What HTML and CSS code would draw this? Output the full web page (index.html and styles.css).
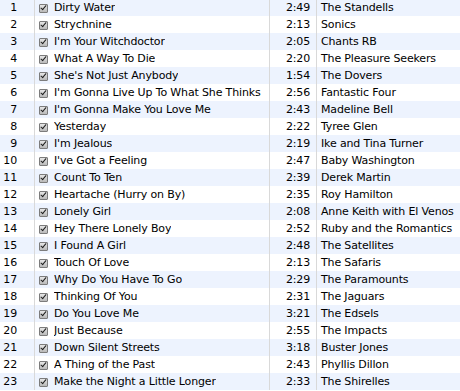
FILE: index.html
```html
<!DOCTYPE html>
<html>
<head>
<meta charset="utf-8">
<link rel="stylesheet" href="styles.css">
</head>
<body>
<div class="list">
  <div class="row"><div class="num">1</div><div class="title"><span class="cb"></span><span class="t">Dirty Water</span></div><div class="time">2:49</div><div class="artist">The Standells</div></div>
  <div class="row"><div class="num">2</div><div class="title"><span class="cb"></span><span class="t">Strychnine</span></div><div class="time">2:13</div><div class="artist">Sonics</div></div>
  <div class="row"><div class="num">3</div><div class="title"><span class="cb"></span><span class="t">I'm Your Witchdoctor</span></div><div class="time">2:05</div><div class="artist">Chants RB</div></div>
  <div class="row"><div class="num">4</div><div class="title"><span class="cb"></span><span class="t">What A Way To Die</span></div><div class="time">2:20</div><div class="artist">The Pleasure Seekers</div></div>
  <div class="row"><div class="num">5</div><div class="title"><span class="cb"></span><span class="t">She's Not Just Anybody</span></div><div class="time">1:54</div><div class="artist">The Dovers</div></div>
  <div class="row"><div class="num">6</div><div class="title"><span class="cb"></span><span class="t">I'm Gonna Live Up To What She Thinks</span></div><div class="time">2:56</div><div class="artist">Fantastic Four</div></div>
  <div class="row"><div class="num">7</div><div class="title"><span class="cb"></span><span class="t">I'm Gonna Make You Love Me</span></div><div class="time">2:43</div><div class="artist">Madeline Bell</div></div>
  <div class="row"><div class="num">8</div><div class="title"><span class="cb"></span><span class="t">Yesterday</span></div><div class="time">2:22</div><div class="artist">Tyree Glen</div></div>
  <div class="row"><div class="num">9</div><div class="title"><span class="cb"></span><span class="t">I'm Jealous</span></div><div class="time">2:19</div><div class="artist">Ike and Tina Turner</div></div>
  <div class="row"><div class="num">10</div><div class="title"><span class="cb"></span><span class="t">I've Got a Feeling</span></div><div class="time">2:47</div><div class="artist">Baby Washington</div></div>
  <div class="row"><div class="num">11</div><div class="title"><span class="cb"></span><span class="t">Count To Ten</span></div><div class="time">2:39</div><div class="artist">Derek Martin</div></div>
  <div class="row"><div class="num">12</div><div class="title"><span class="cb"></span><span class="t">Heartache (Hurry on By)</span></div><div class="time">2:35</div><div class="artist">Roy Hamilton</div></div>
  <div class="row"><div class="num">13</div><div class="title"><span class="cb"></span><span class="t">Lonely Girl</span></div><div class="time">2:08</div><div class="artist">Anne Keith with El Venos</div></div>
  <div class="row"><div class="num">14</div><div class="title"><span class="cb"></span><span class="t">Hey There Lonely Boy</span></div><div class="time">2:52</div><div class="artist">Ruby and the Romantics</div></div>
  <div class="row"><div class="num">15</div><div class="title"><span class="cb"></span><span class="t">I Found A Girl</span></div><div class="time">2:48</div><div class="artist">The Satellites</div></div>
  <div class="row"><div class="num">16</div><div class="title"><span class="cb"></span><span class="t">Touch Of Love</span></div><div class="time">2:13</div><div class="artist">The Safaris</div></div>
  <div class="row"><div class="num">17</div><div class="title"><span class="cb"></span><span class="t">Why Do You Have To Go</span></div><div class="time">2:29</div><div class="artist">The Paramounts</div></div>
  <div class="row"><div class="num">18</div><div class="title"><span class="cb"></span><span class="t">Thinking Of You</span></div><div class="time">2:31</div><div class="artist">The Jaguars</div></div>
  <div class="row"><div class="num">19</div><div class="title"><span class="cb"></span><span class="t">Do You Love Me</span></div><div class="time">3:21</div><div class="artist">The Edsels</div></div>
  <div class="row"><div class="num">20</div><div class="title"><span class="cb"></span><span class="t">Just Because</span></div><div class="time">2:55</div><div class="artist">The Impacts</div></div>
  <div class="row"><div class="num">21</div><div class="title"><span class="cb"></span><span class="t">Down Silent Streets</span></div><div class="time">3:18</div><div class="artist">Buster Jones</div></div>
  <div class="row"><div class="num">22</div><div class="title"><span class="cb"></span><span class="t">A Thing of the Past</span></div><div class="time">2:43</div><div class="artist">Phyllis Dillon</div></div>
  <div class="row"><div class="num">23</div><div class="title"><span class="cb"></span><span class="t">Make the Night a Little Longer</span></div><div class="time">2:33</div><div class="artist">The Shirelles</div></div>
</div>
</body>
</html>
```
FILE: styles.css
```css
html, body {
  margin: 0;
  padding: 0;
  background: #ffffff;
  overflow: hidden;
}
body {
  width: 460px;
  height: 391px;
  font-family: "DejaVu Sans", sans-serif;
  font-size: 11px;
  letter-spacing: -0.15px;
  color: #000;
}
.list {
  margin-top: -1px;
}
.row {
  display: flex;
  height: 17px;
  line-height: 17px;
  white-space: nowrap;
}
.row:nth-child(odd) {
  background: #edf3fe;
}
.num {
  width: 35px;
  box-sizing: border-box;
  padding-right: 17px;
  text-align: right;
  border-right: 1px solid #d9d9d9;
  flex: none;
}
.title {
  width: 235px;
  box-sizing: border-box;
  padding-left: 4px;
  border-right: 1px solid #d9d9d9;
  display: flex;
  align-items: center;
  overflow: hidden;
  flex: none;
}
.cb {
  width: 9px;
  height: 9px;
  box-sizing: border-box;
  border: 1px solid #7c7c7c;
  border-radius: 1px;
  background: linear-gradient(#e6e6e6, #b9b9b9);
  position: relative;
  flex: none;
  margin-top: 1px;
  margin-right: 6px;
}
.cb::after {
  content: "";
  position: absolute;
  left: 2px;
  top: -1px;
  width: 2px;
  height: 5px;
  border-right: 1.7px solid #1e1e1e;
  border-bottom: 1.7px solid #1e1e1e;
  transform: rotate(40deg);
}
.t {
  overflow: hidden;
}
.time {
  width: 47px;
  box-sizing: border-box;
  padding-right: 6px;
  text-align: right;
  border-right: 1px solid #d9d9d9;
  flex: none;
}
.artist {
  padding-left: 4px;
  flex: 1;
  overflow: hidden;
}
```
